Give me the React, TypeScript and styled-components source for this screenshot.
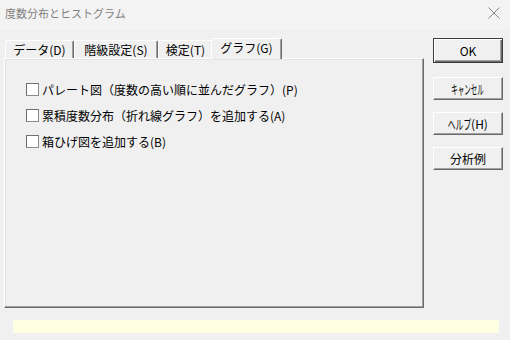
import React from "react";
import styled, { createGlobalStyle } from "styled-components";

const Global = createGlobalStyle`
  html, body { margin: 0; padding: 0; background: #f0f0f0; }
  body { font-family: "Noto Sans CJK JP", "Noto Sans", sans-serif; }
  * { box-sizing: border-box; }
`;

const Window = styled.div`
  width: 510px;
  height: 340px;
  display: flex;
  flex-direction: column;
  background: #f0f0f0;
  overflow: hidden;
`;

const TitleBar = styled.div`
  height: 30px;
  padding: 0 10px 4px 5px;
  display: flex;
  align-items: center;
  justify-content: space-between;
  background: #f3f3f3;
  color: #7f7f7f;
  font-size: 11px;
`;

const Body = styled.div`
  display: flex;
  padding: 8px 0 0 4px;
  gap: 9px;
`;

const LeftCol = styled.div`
  width: 420px;
  display: flex;
  flex-direction: column;
`;

const TabStrip = styled.div`
  display: flex;
  align-items: flex-end;
  height: 20px;
  padding-left: 1px;
  position: relative;
  z-index: 1;
`;

const Tab = styled.div<{ $width: number; $active?: boolean }>`
  width: ${(p) => p.$width}px;
  height: ${(p) => (p.$active ? 21 : 18)}px;
  margin-left: ${(p) => (p.$active ? -2 : 0)}px;
  margin-bottom: ${(p) => (p.$active ? -1 : 0)}px;
  display: flex;
  align-items: center;
  justify-content: center;
  font-size: 12px;
  color: #000;
  background: #f0f0f0;
  border-top: 1px solid #ffffff;
  border-left: 1px solid #ffffff;
  border-right: 1px solid #696969;
  box-shadow: inset -1px 0 0 #a0a0a0;
  border-radius: 2px 2px 0 0;
  padding-bottom: ${(p) => (p.$active ? 3 : 1)}px;
  position: relative;
  z-index: ${(p) => (p.$active ? 2 : 1)};
`;

const Panel = styled.div`
  height: 250px;
  border-top: 1px solid #ffffff;
  border-left: 1px solid #ffffff;
  border-right: 1px solid #696969;
  border-bottom: 1px solid #696969;
  box-shadow: inset -1px -1px 0 #a0a0a0, inset 1px 1px 0 #e3e3e3;
  padding: 17px 0 0 21px;
  display: flex;
  flex-direction: column;
`;

const CheckRow = styled.label`
  display: flex;
  align-items: center;
  height: 26px;
  gap: 3px;
  font-size: 12px;
  color: #000;
`;

const Box = styled.span`
  width: 13px;
  height: 13px;
  flex: none;
  border: 1px solid #8a8a8a;
  border-top-color: #6f6f6f;
  border-left-color: #6f6f6f;
  background: #ffffff;
`;

const ButtonCol = styled.div`
  width: 70px;
  display: flex;
  flex-direction: column;
  gap: 12px;
`;

const Button = styled.div<{ $default?: boolean }>`
  height: ${(p) => (p.$default ? 25 : 23)}px;
  margin-bottom: ${(p) => (p.$default ? 2 : 0)}px;
  display: flex;
  align-items: center;
  justify-content: center;
  font-size: 12px;
  color: #000;
  background: #f0f0f0;
  white-space: nowrap;
  ${(p) =>
    p.$default
      ? `border: 1px solid #3c3c3c;
         box-shadow: inset 1px 1px 0 #ffffff, inset -1px -1px 0 #696969, inset -2px -2px 0 #a0a0a0;`
      : `border-top: 1px solid #ffffff;
         border-left: 1px solid #ffffff;
         border-right: 1px solid #696969;
         border-bottom: 1px solid #696969;
         box-shadow: inset -1px -1px 0 #a0a0a0;`}
`;

/* half-width style katakana: full-width glyphs squeezed horizontally */
const Narrow = styled.span<{ $scale: number; $trim: number }>`
  display: inline-block;
  white-space: nowrap;
  font-size: 13px;
  transform: scaleX(${(p) => p.$scale});
  margin: 0 -${(p) => p.$trim}px;
`;

const Hint = styled.div`
  height: 13px;
  margin: 12px 11px 0 13px;
  background: #ffffe1;
`;

const CloseIcon = () => (
  <svg width="12" height="12" viewBox="0 0 12 12">
    <path d="M0.5 0.5 L11.5 11.5 M11.5 0.5 L0.5 11.5" stroke="#858585" strokeWidth="1" />
  </svg>
);

const options = [
  "パレート図（度数の高い順に並んだグラフ）(P)",
  "累積度数分布（折れ線グラフ）を追加する(A)",
  "箱ひげ図を追加する(B)",
];

export default function App() {
  return (
    <>
      <Global />
      <Window>
        <TitleBar>
          <span>度数分布とヒストグラム</span>
          <CloseIcon />
        </TitleBar>
        <Body>
          <LeftCol>
            <TabStrip>
              <Tab $width={69}>データ(D)</Tab>
              <Tab $width={84}>階級設定(S)</Tab>
              <Tab $width={55}>検定(T)</Tab>
              <Tab $width={71} $active>
                グラフ(G)
              </Tab>
            </TabStrip>
            <Panel>
              {options.map((o) => (
                <CheckRow key={o}>
                  <Box />
                  <span>{o}</span>
                </CheckRow>
              ))}
            </Panel>
          </LeftCol>
          <ButtonCol>
            <Button $default>OK</Button>
            <Button>
              <Narrow $scale={0.5} $trim={16}>
                キャンセル
              </Narrow>
            </Button>
            <Button>
              <Narrow $scale={0.6} $trim={8}>
                ヘルプ
              </Narrow>
              <span>(H)</span>
            </Button>
            <Button>分析例</Button>
          </ButtonCol>
        </Body>
        <Hint />
      </Window>
    </>
  );
}
